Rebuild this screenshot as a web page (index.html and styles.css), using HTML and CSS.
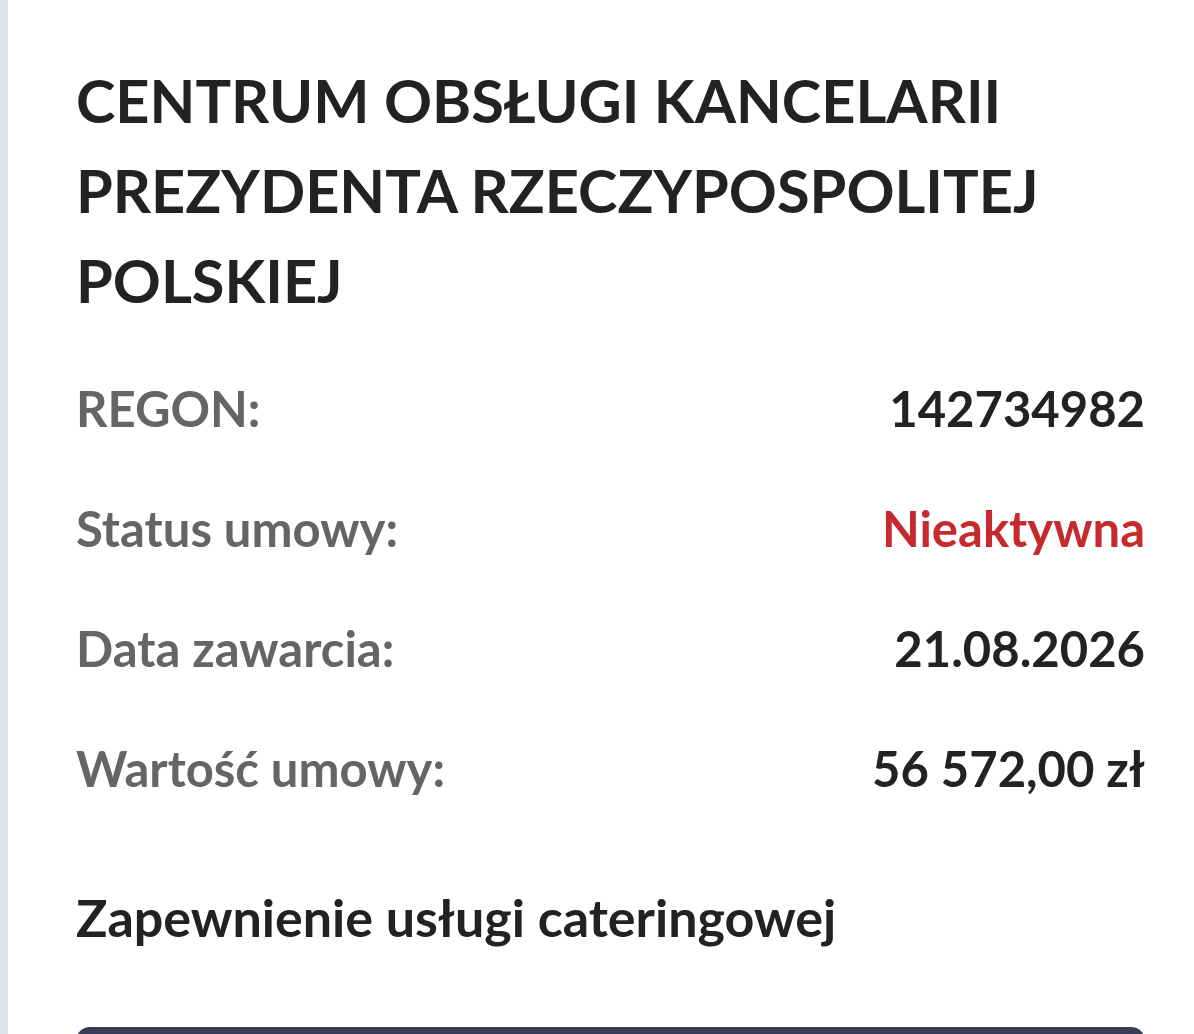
FILE: index.html
```html
<!DOCTYPE html>
<html lang="pl">
<head>
    <meta charset="UTF-8">
    <meta name="viewport" content="width=device-width, initial-scale=1.0">
    <title>Umowa - szczegóły</title>
    <link rel="stylesheet" href="styles.css">
</head>
<body>
    <div class="card">
        <!-- Nazwa zamawiającego -->
        <h2 class="card-title">CENTRUM OBSŁUGI KANCELARII PREZYDENTA RZECZYPOSPOLITEJ POLSKIEJ</h2>

        <!-- Dane umowy -->
        <div class="details">
            <div class="row">
                <span class="label">REGON:</span>
                <span class="value">142734982</span>
            </div>
            <div class="row">
                <span class="label">Status umowy:</span>
                <span class="value inactive">Nieaktywna</span>
            </div>
            <div class="row">
                <span class="label">Data zawarcia:</span>
                <span class="value">21.08.2026</span>
            </div>
            <div class="row">
                <span class="label">Wartość umowy:</span>
                <span class="value">56 572,00 zł</span>
            </div>
        </div>

        <p class="subject">Zapewnienie usługi cateringowej</p>

        <button class="details-button" type="button" aria-label="Szczegóły umowy"></button>
    </div>
</body>
</html>
```

FILE: styles.css
```css
body {
    font-family: 'Lato', 'Noto Sans', sans-serif;
    margin: 0;
    background-color: #dde6ef;
}
.card {
    margin-left: 8px;
    min-height: 100vh;
    padding: 55px 49px 0 68px;
    background-color: #ffffff;
    box-sizing: border-box;
}
.card-title {
    margin: 0;
    color: #222222;
    font-size: 59.5px;
    font-weight: 700;
    line-height: 90px;
}
.details {
    display: flex;
    flex-direction: column;
    gap: 46px;
    margin-top: 46px;
}
.row {
    display: flex;
    justify-content: space-between;
    align-items: baseline;
    font-size: 49px;
    font-weight: 700;
    line-height: 74px;
}
.label {
    color: #656565;
}
.value {
    color: #222222;
}
.value.inactive {
    color: #c62a2f;
}
.subject {
    margin: 75px 0 0;
    color: #222222;
    font-size: 52px;
    font-weight: 700;
    line-height: 74px;
}
.details-button {
    display: block;
    width: 100%;
    height: 150px;
    margin-top: 73px;
    border: none;
    border-radius: 14px;
    background-color: #363d55;
    cursor: pointer;
}
```
